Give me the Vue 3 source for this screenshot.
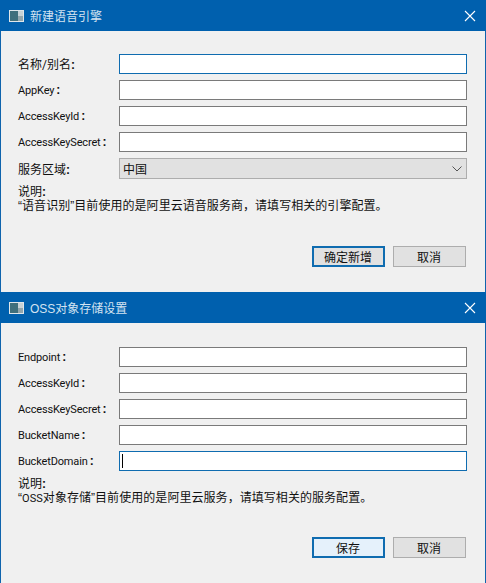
<script setup>
const dialogs = [
  {
    title: '新建语音引擎',
    height: 292,
    pad: 23,
    fields: [
      { label: '名称/别名', cjk: true, active: true },
      { label: 'AppKey' },
      { label: 'AccessKeyId' },
      { label: 'AccessKeySecret' }
    ],
    combo: true,
    latin: '',
    note: '“语音识别”目前使用的是阿里云语音服务商，请填写相关的引擎配置。',
    ok: '确定新增',
    okHover: false
  },
  {
    title: 'OSS对象存储设置',
    height: 291,
    pad: 24,
    fields: [
      { label: 'Endpoint' },
      { label: 'AccessKeyId' },
      { label: 'AccessKeySecret' },
      { label: 'BucketName' },
      { label: 'BucketDomain', active: true, caret: true }
    ],
    combo: false,
    latin: 'OSS',
    note: '对象存储”目前使用的是阿里云服务，请填写相关的服务配置。',
    ok: '保存',
    okHover: true
  }
]
</script>

<template>
  <div class="page">
    <section
      v-for="d in dialogs"
      :key="d.title"
      class="dialog"
      :style="{ height: d.height + 'px' }"
    >
      <header class="titlebar">
        <svg class="appicon" width="15" height="12" viewBox="0 0 15 12">
          <rect width="15" height="12" fill="#dfe6ea" />
          <rect x="1" y="1" width="8" height="10" fill="#3f6f7c" />
          <rect x="9" y="1" width="5" height="5" fill="#c7d2d6" />
          <rect x="9" y="6" width="5" height="5" fill="#93a6ad" />
        </svg>
        <span class="title">{{ d.title }}</span>
        <svg class="close" width="12" height="12" viewBox="0 0 12 12">
          <path d="M1 1 L11 11 M11 1 L1 11" stroke="#fff" stroke-width="1.1" fill="none" />
        </svg>
      </header>
      <div class="body" :style="{ paddingTop: d.pad + 'px' }">
        <div class="rows">
          <div v-for="f in d.fields" :key="f.label" class="row">
            <label class="label" :class="{ cjk: f.cjk }">{{ f.label }}<span class="colon">:</span></label>
            <div class="input" :class="{ active: f.active }">
              <span v-if="f.caret" class="caret"></span>
            </div>
          </div>
          <div v-if="d.combo" class="row comborow">
            <label class="label cjk">服务区域<span class="colon">:</span></label>
            <div class="combo">
              <span>中国</span>
              <svg width="10" height="6" viewBox="0 0 10 6">
                <path d="M0.5 0.5 L5 5 L9.5 0.5" stroke="#555" fill="none" />
              </svg>
            </div>
          </div>
        </div>
        <div class="note">
          <div>说明<span class="colon">:</span></div>
          <div><template v-if="d.latin">“<span class="latin">{{ d.latin }}</span></template>{{ d.note }}</div>
        </div>
        <div class="buttons">
          <button class="btn primary" :class="{ hover: d.okHover }">{{ d.ok }}</button>
          <button class="btn">取消</button>
        </div>
      </div>
    </section>
  </div>
</template>

<style scoped>
.page {
  width: 486px;
  height: 583px;
  display: flex;
  flex-direction: column;
  font-family: "Liberation Sans", "Noto Sans CJK SC", sans-serif;
  font-size: 12px;
  color: #111;
}
.dialog {
  box-sizing: border-box;
  display: flex;
  flex-direction: column;
  border-left: 1px solid #0f64ad;
  border-right: 1px solid #0f64ad;
  background: #f0f0f0;
}
.titlebar {
  flex: none;
  height: 31px;
  margin: 0 -1px;
  padding: 0 10px 0 9px;
  box-sizing: border-box;
  display: flex;
  align-items: center;
  background: #0060ae;
  color: #d3e3f1;
}
.appicon {
  flex: none;
}
.title {
  margin-left: 6px;
  flex: 1;
  font-size: 12px;
}
.close {
  flex: none;
}
.body {
  flex: 1;
  display: flex;
  flex-direction: column;
  padding: 0 18px 0 17px;
}
.rows {
  display: flex;
  flex-direction: column;
  gap: 6px;
}
.row {
  display: flex;
  align-items: center;
  height: 20px;
}
.comborow {
  height: 21px;
}
.label {
  width: 101px;
  flex: none;
  padding-bottom: 1px;
  font-family: Roboto, "Noto Sans CJK SC", sans-serif;
  font-size: 11px;
  letter-spacing: -0.15px;
  white-space: nowrap;
}
.label.cjk {
  font-size: 12px;
  letter-spacing: 0;
}
.colon {
  margin-left: 2px;
  font-family: "Liberation Sans", sans-serif;
  font-size: 12px;
  font-weight: 700;
}
.cjk .colon,
.note .colon {
  margin-left: 0;
}
.latin {
  font-family: Roboto, sans-serif;
  font-size: 11px;
}
.input {
  box-sizing: border-box;
  flex: 1;
  height: 20px;
  background: #fff;
  border: 1px solid #7a7a7a;
  display: flex;
  align-items: center;
  padding-left: 2px;
}
.input.active {
  border-color: #0f6cb0;
}
.caret {
  width: 1px;
  height: 14px;
  background: #000;
}
.combo {
  box-sizing: border-box;
  flex: 1;
  height: 21px;
  background: #e1e1e1;
  border: 1px solid #adadad;
  display: flex;
  align-items: center;
  justify-content: space-between;
  padding: 0 4px 0 3px;
}
.note {
  margin-top: 6px;
  line-height: 14px;
  font-size: 12px;
  letter-spacing: 0.05px;
  white-space: nowrap;
}
.buttons {
  margin-top: auto;
  margin-bottom: 25px;
  display: flex;
  justify-content: flex-end;
  gap: 8px;
  padding-right: 1px;
}
.btn {
  box-sizing: border-box;
  width: 73px;
  height: 21px;
  padding: 0 1px 0 0;
  background: #e1e1e1;
  border: 1px solid #adadad;
  font: inherit;
  color: #111;
}
.btn.primary {
  border: 2px solid #0f6cb0;
}
.btn.hover {
  background: #e5f1fb;
}
</style>
